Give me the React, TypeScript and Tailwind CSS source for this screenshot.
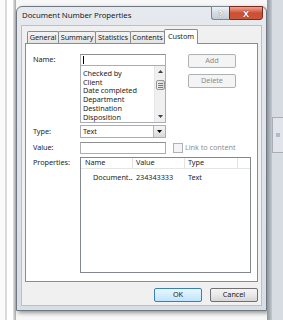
import React from "react";

function Tab({ label, w, selected }: { label: string; w: string; selected?: boolean }) {
  if (selected) {
    return (
      <div className={`${w} h-[15px] -mb-px -ml-px relative z-10 bg-white border border-b-0 border-[#898c95] rounded-t-[2px] flex items-center justify-center`}>
        {label}
      </div>
    );
  }
  return (
    <div className={`${w} h-[12px] -ml-px first:ml-0 bg-gradient-to-b from-[#f3f3f3] to-[#e3e3e3] border border-b-0 border-[#898c95] rounded-t-[2px] flex items-center justify-center`}>
      {label}
    </div>
  );
}

function Btn({ label, variant }: { label: string; variant: "disabled" | "default" | "normal" }) {
  const cls =
    variant === "disabled"
      ? "bg-[#f4f4f4] border-[#adb2b5] text-[#8d8d8d]"
      : variant === "default"
      ? "bg-gradient-to-b from-[#eaf6fd] to-[#bee6fd] border-[#3c7fb1] text-[#1a1a1a]"
      : "bg-gradient-to-b from-[#f4f4f4] via-[#e9e9e9] to-[#d6d6d6] border-[#707070] text-[#1a1a1a]";
  return (
    <div className={`w-[48px] h-[14px] border rounded-[2px] flex items-center justify-center ${cls}`}>
      {label}
    </div>
  );
}

export default function App() {
  const items = ["Checked by", "Client", "Date completed", "Department", "Destination", "Disposition"];
  return (
    <div className="w-[283px] h-[320px] overflow-hidden flex bg-white font-['Noto_Sans',sans-serif] text-[7.3px] tracking-[-0.05px] leading-none text-[#1e1e1e]">
      {/* background window at left */}
      <div className="w-[16px] flex shrink-0">
        <div className="w-[5px] bg-[#fbfbfb]" />
        <div className="w-[2px] bg-[#d9d9d9]" />
        <div className="w-[6px] bg-white" />
        <div className="w-[3px] bg-gradient-to-r from-[#e4e4e4] to-[#a9a9a9]" />
      </div>

      {/* dialog column */}
      <div className="w-[251px] shrink-0 pt-[6px] flex flex-col bg-[#f7f7f7]">
        <div className="h-[305px] rounded-t-[6px] border border-[#6f7780] bg-gradient-to-b from-[#e6eaef] to-[#d9dee5] flex flex-col px-[4px] pb-[4px] shadow-[2px_2px_4px_rgba(0,0,0,0.4)]">
          {/* title bar */}
          <div className="h-[18px] flex items-start">
            <div className="h-full flex items-center text-[7.8px] text-[#1a1a1a] pl-[1px]">Document Number Properties</div>
            <div className="ml-auto -mr-[1px] -mt-px flex">
              <div className="w-[18px] h-[14px] border border-[#7c8692] border-r-0 rounded-bl-[3px] bg-gradient-to-b from-[#eef1f5] via-[#d5dbe3] to-[#c4ccd6] flex items-center justify-center text-[9px] text-white font-bold [text-shadow:0_0_1px_#555]">
                ?
              </div>
              <div className="w-[34px] h-[14px] border border-[#7b2a1d] rounded-br-[3px] bg-gradient-to-b from-[#e9a695] via-[#cf4d33] to-[#c8583c] flex items-center justify-center text-[9px] text-white font-bold [text-shadow:0_0_1px_#3a0a00]">
                X
              </div>
            </div>
          </div>

          {/* client area */}
          <div className="flex-1 bg-[#f0f0f0] border border-[#b8c0c9] px-[3px] pt-[3px] flex flex-col">
            {/* tabs */}
            <div className="h-[14px] flex items-end pl-[2px]">
              <Tab label="General" w="w-[32px]" />
              <Tab label="Summary" w="w-[38px]" />
              <Tab label="Statistics" w="w-[36px]" />
              <Tab label="Contents" w="w-[35px]" />
              <Tab label="Custom" w="w-[34px]" selected />
            </div>

            {/* tab panel */}
            <div className="h-[239px] bg-white border border-[#898c95] pl-[7px] pt-[10px] flex flex-col">
              {/* name row */}
              <div className="flex">
                <div className="w-[47px] h-[12px] flex items-center">Name:</div>
                <div className="w-[86px] flex flex-col">
                  <div className="h-[12px] border border-[#abadb3] border-t-[#8e8f8f] bg-white flex items-center pl-[2px]">
                    <div className="w-px h-[8px] bg-black" />
                  </div>
                  <div className="h-[57px] border border-t-0 border-[#abadb3] bg-white flex">
                    <div className="flex-1 pt-[3px] pl-[2px] flex flex-col">
                      {items.map((t) => (
                        <div key={t} className="h-[9px] flex items-center whitespace-nowrap">
                          {t}
                        </div>
                      ))}
                    </div>
                    <div className="w-[11px] bg-[#f0f0f0] border-l border-[#e6e6e6] flex flex-col items-center">
                      <div className="h-[11px] flex items-center justify-center">
                        <svg width="5" height="3" viewBox="0 0 5 3"><path d="M2.5 0 L5 3 L0 3 Z" fill="#404040" /></svg>
                      </div>
                      <div className="mt-[3px] w-[9px] h-[10px] rounded-[2px] border border-[#959595] bg-gradient-to-r from-[#f2f2f2] to-[#d8d8d8] flex flex-col items-center justify-center gap-[1px]">
                        <div className="w-[5px] h-px bg-[#7a7a7a]" />
                        <div className="w-[5px] h-px bg-[#7a7a7a]" />
                        <div className="w-[5px] h-px bg-[#7a7a7a]" />
                      </div>
                      <div className="mt-auto h-[11px] flex items-center justify-center">
                        <svg width="5" height="3" viewBox="0 0 5 3"><path d="M0 0 L5 0 L2.5 3 Z" fill="#404040" /></svg>
                      </div>
                    </div>
                  </div>
                </div>
                <div className="ml-[22px] flex flex-col gap-[6px]">
                  <Btn label="Add" variant="disabled" />
                  <Btn label="Delete" variant="disabled" />
                </div>
              </div>

              {/* type row */}
              <div className="flex mt-[2px]">
                <div className="w-[47px] h-[13px] flex items-center">Type:</div>
                <div className="w-[86px] h-[13px] border border-[#abadb3] bg-white flex">
                  <div className="flex-1 flex items-center pl-[2px]">Text</div>
                  <div className="w-[12px] border-l border-[#b5b5b5] bg-gradient-to-b from-[#f5f5f5] to-[#d9d9d9] flex items-center justify-center">
                    <svg width="5" height="3" viewBox="0 0 5 3"><path d="M0 0 L5 0 L2.5 3 Z" fill="#000" /></svg>
                  </div>
                </div>
              </div>

              {/* value row */}
              <div className="flex mt-[4px]">
                <div className="w-[47px] h-[12px] flex items-center">Value:</div>
                <div className="w-[86px] h-[12px] border border-[#abadb3] border-t-[#8e8f8f] bg-white" />
                <div className="ml-[7px] mt-px w-[10px] h-[10px] border border-[#b1b1b1] bg-[#f4f4f4]" />
                <div className="ml-[2px] h-[12px] flex items-center text-[#8f8f8f]">Link to content</div>
              </div>

              {/* properties row */}
              <div className="flex mt-[3px]">
                <div className="w-[47px] h-[12px] flex items-center">Properties:</div>
                <div className="w-[171px] h-[116px] border border-[#828790] bg-white flex flex-col">
                  <div className="h-[11px] flex border-b border-[#e5e5e5]">
                    <div className="w-[52px] border-r border-[#e3e3e3] flex items-center pl-[4px]">Name</div>
                    <div className="w-[52px] border-r border-[#e3e3e3] flex items-center pl-[3px]">Value</div>
                    <div className="w-[53px] border-r border-[#e3e3e3] flex items-center pl-[3px]">Type</div>
                    <div className="flex-1" />
                  </div>
                  <div className="mt-[3px] h-[11px] flex">
                    <div className="w-[52px] flex items-center pl-[12px] whitespace-nowrap overflow-hidden">Document...</div>
                    <div className="w-[52px] flex items-center pl-[3px]">234343333</div>
                    <div className="w-[53px] flex items-center pl-[3px]">Text</div>
                  </div>
                </div>
              </div>
            </div>

            {/* bottom buttons */}
            <div className="mt-[6px] flex justify-end gap-[8px]">
              <Btn label="OK" variant="default" />
              <Btn label="Cancel" variant="normal" />
            </div>
          </div>
        </div>
      </div>

      {/* right background */}
      <div className="flex-1 flex">
        <div className="w-[5px] bg-gradient-to-r from-[#8e949c] to-[#c3c8cf]" />
        <div className="flex-1 bg-[#d7dbe2] pt-[117px]">
          <div className="h-[36px] border border-[#a7aeb8] border-r-0 bg-[#e1e5eb] flex items-center justify-center">
            <div className="w-[4px] h-[4px] bg-[#b5bbc4]" />
          </div>
        </div>
      </div>
    </div>
  );
}
